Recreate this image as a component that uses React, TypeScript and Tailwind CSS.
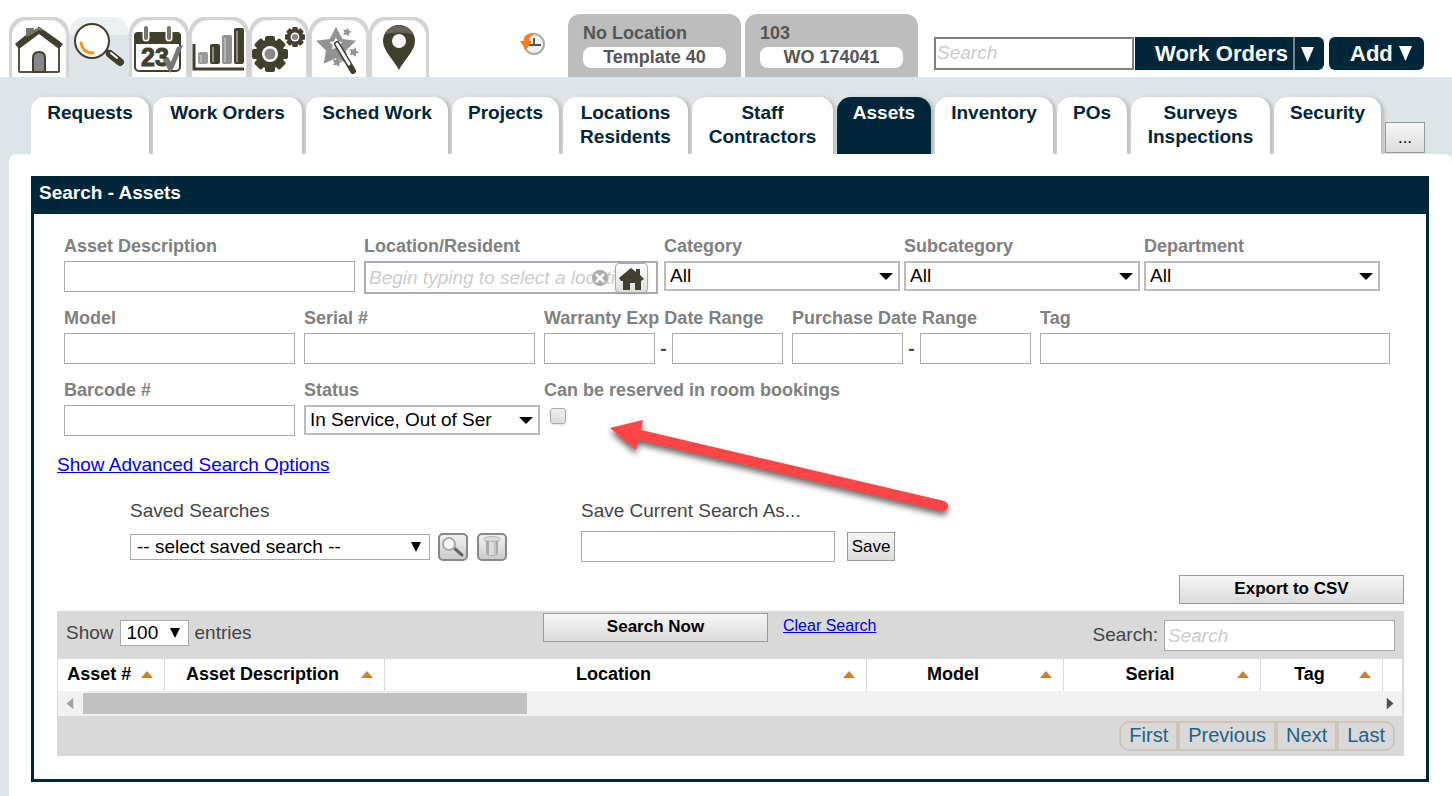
import React from 'react';
import { clsx } from 'clsx';

const TOOLS = ['Home', 'Search', 'Calendar', 'Reports', 'Settings', 'Wizard', 'Map'] as const;
type Tool = (typeof TOOLS)[number];

const STAR = 'M0-10 3.2-4 10-3.1 5 1.8 6.2 8.4 0 5.6-6.2 8.4-5 1.8-10-3.1-3.2-4Z';

const NAV_TABS = [
  { lines: ['Requests'], width: 'w-[118px]' },
  { lines: ['Work Orders'], width: 'w-[149px]' },
  { lines: ['Sched Work'], width: 'w-[142px]' },
  { lines: ['Projects'], width: 'w-[107px]' },
  { lines: ['Locations', 'Residents'], width: 'w-[125px]' },
  { lines: ['Staff', 'Contractors'], width: 'w-[141px]' },
  { lines: ['Assets'], width: 'w-[94px]', active: true },
  { lines: ['Inventory'], width: 'w-[118px]' },
  { lines: ['POs'], width: 'w-[70px]' },
  { lines: ['Surveys', 'Inspections'], width: 'w-[139px]' },
  { lines: ['Security'], width: 'w-[107px]' },
];

const COLUMNS = [
  { label: 'Asset #', width: 'w-[106px]' },
  { label: 'Asset Description', width: 'w-[220px]' },
  { label: 'Location', width: 'w-[482px]' },
  { label: 'Model', width: 'w-[197px]' },
  { label: 'Serial', width: 'w-[197px]' },
  { label: 'Tag', width: 'w-[122px]' },
];

const greyButton = 'border border-[#999] bg-linear-to-b from-[#f6f6f6] to-[#dcdcdc] text-black';
const textBox = 'h-[31px] border border-[#a9a9a9] bg-white px-1 text-[19px] text-black outline-none';
const placeholder = 'placeholder:italic placeholder:text-[#ccc]';

const Gear: React.FC<{ x: number; y: number; r: number }> = ({ x, y, r }) => (
  <g transform={`translate(${x} ${y}) scale(${r / 18})`}>
    {[0, 45, 90, 135].map((angle) => (
      <rect key={angle} x="-5" y="-18" width="10" height="36" rx="2" transform={`rotate(${angle})`} fill="#423f2c" />
    ))}
    <circle r="14.5" fill="#423f2c" />
    <circle r="8" fill="#fff" />
    <circle r="5.5" fill="#888" />
  </g>
);

const ToolIcon: React.FC<{ name: Tool }> = ({ name }) => (
  <svg viewBox="0 0 60 60" className="size-[60px]" aria-hidden="true">
    {name === 'Home' && (
      <>
        <path d="M10 25v29q0 1 1 1h38q1 0 1-1V25L30 11Z" fill="#fff" stroke="#55523c" strokeWidth="2" />
        <path d="M17 11h8v3l5-4L54 27l-4 5L30 17 10 32l-4-5 11-9Z" fill="#423f2c" />
        <path d="M17 11h8v3l5-4 6 4-6-1-8 5-5 2Z" fill="#77766b" />
        <path d="M24 55V41q0-6 6-6t6 6v14Z" fill="#888" stroke="#423f2c" strokeWidth="2" />
      </>
    )}
    {name === 'Search' && (
      <>
        <path d="m36 32 4 4" stroke="#423f2c" strokeWidth="4" />
        <path d="m41 37 10 8" stroke="#423f2c" strokeWidth="8" strokeLinecap="round" />
        <path d="m42 36 6 5" stroke="#fff" strokeWidth="2" strokeLinecap="round" />
        <circle cx="23" cy="24" r="17" fill="#fff" stroke="#423f2c" strokeWidth="2" />
        <path d="M12 26q2 10 12 10" fill="none" stroke="#ff9017" strokeWidth="3" strokeLinecap="round" />
      </>
    )}
    {name === 'Calendar' && (
      <>
        <rect x="6" y="16" width="45" height="38" rx="4" fill="#fff" stroke="#423f2c" strokeWidth="2" />
        <path d="M5 27V19q0-4 4-4h39q4 0 4 4v8Z" fill="#423f2c" />
        <path d="M17 11v10M40 11v10" stroke="#fff" strokeWidth="7" strokeLinecap="round" />
        <path d="M17 11v10M40 11v10" stroke="#77766b" strokeWidth="4" strokeLinecap="round" />
        <text x="12" y="49" fontSize="25" fontWeight="700" fill="#423f2c" stroke="#423f2c">23</text>
        <path d="m34 43 5-3 3 5 6-15 6-2-9 22-4 6Z" fill="#777" />
      </>
    )}
    {name === 'Reports' && (
      <>
        <path d="M5 27v25h50" fill="none" stroke="#423f2c" strokeWidth="3" />
        <rect x="9" y="35" width="10" height="12" rx="2" fill="#999" />
        <rect x="21" y="27" width="10" height="20" rx="2" fill="#423f2c" />
        <rect x="33" y="18" width="10" height="29" rx="2" fill="#929292" />
        <rect x="45" y="11" width="10" height="36" rx="2" fill="#423f2c" />
        <path d="M12 38v7M24 30v15M36 21v24M48 14v31" stroke="#d8d8d2" />
      </>
    )}
    {name === 'Settings' && (
      <>
        <Gear x={21} y={37} r={18} />
        <Gear x={46} y={20} r={10} />
      </>
    )}
    {name === 'Wizard' && (
      <>
        <path d={STAR} transform="translate(27 30) scale(2)" fill="#929292" />
        <path d={STAR} transform="translate(38 15) rotate(15) scale(.45)" fill="#929292" />
        <path d={STAR} transform="translate(45 35) rotate(20) scale(.5)" fill="#929292" />
        <path d={STAR} transform="translate(28 45) rotate(10) scale(.5)" fill="#929292" />
        <path d={STAR} transform="translate(27 27) scale(.65)" fill="#fff" />
        <path d="m28 27 16 27" stroke="#423f2c" strokeWidth="6" strokeLinecap="round" />
        <path d="m28 27 12 20" stroke="#fff" strokeWidth="3" strokeLinecap="round" />
      </>
    )}
    {name === 'Map' && (
      <>
        <path d="M30 53C25 43 14 34 14 24a16 16 0 0 1 32 0c0 10-11 19-16 29Z" fill="#423f2c" />
        <path d="M16 17a16 16 0 0 1 28 0q-14-3-28 0Z" fill="#67655a" />
        <circle cx="30" cy="24" r="7" fill="#fff" />
      </>
    )}
  </svg>
);

const Triangle: React.FC<{ className: string }> = ({ className }) => (
  <svg viewBox="0 0 12 12" preserveAspectRatio="none" className={className} aria-hidden="true">
    <path d="M0 0h12L6 12Z" fill="currentColor" />
  </svg>
);

interface FieldProps {
  label: string;
  id: string;
  className: string;
  children: React.ReactNode;
}

const Field: React.FC<FieldProps> = ({ label, id, className, children }) => (
  <div className={clsx('h-[72px] shrink-0', className)}>
    <label htmlFor={id} className="mb-[3px] block text-[18px] leading-6 font-bold whitespace-nowrap text-[#808080]">
      {label}
    </label>
    {children}
  </div>
);

const FilterSelect: React.FC<{ id: string; value: string }> = ({ id, value }) => (
  <div className="relative w-[236px]">
    <select
      id={id}
      className="block h-[30px] w-full appearance-none border-2 border-[#bbb] bg-white pr-[46px] pl-1 text-[19px] leading-6 text-black"
    >
      <option>{value}</option>
    </select>
    <Triangle className="pointer-events-none absolute top-3 right-[7px] h-[7px] w-3.5 text-black" />
  </div>
);

const DateRange: React.FC<{ id: string; label: string }> = ({ id, label }) => (
  <div className="flex items-center">
    <input id={id} className={clsx(textBox, 'w-[111px]')} />
    <span className="w-[17px] text-center text-[19px] leading-6 font-bold text-[#444]">-</span>
    <input aria-label={`${label} end`} className={clsx(textBox, 'w-[111px]')} />
  </div>
);

const Header = () => (
  <header className="flex h-[77px] items-end bg-white pl-[9px]">
    {TOOLS.map((tool) => (
      <button
        key={tool}
        aria-label={tool}
        className={clsx(
          'h-[60px] w-[60px] shrink-0 rounded-t-[16px]',
          tool === 'Search'
            ? 'bg-linear-to-b from-[#edf0f3] from-30% to-[#dee5e8] to-30%'
            : 'bg-white shadow-[inset_3px_3px_1px_#d3d3d3,inset_-3px_3px_1px_#d3d3d3]'
        )}
      >
        <ToolIcon name={tool} />
      </button>
    ))}

    <button aria-label="History" className="mb-5 ml-[91px] shrink-0">
      <svg viewBox="0 0 26 26" className="size-[26px]">
        <circle cx="14" cy="13" r="10" fill="#f1f3f3" stroke="#a7aeae" strokeWidth="2" />
        <path d="M14 7v7M9 14h12" stroke="#555" strokeWidth="2" />
        <path d="M15 2Q3 2 4 10H0l6 9 6-9H9q0-4 6-8Z" fill="#ff7a1c" />
      </svg>
    </button>

    {[
      ['No Location', 'Template 40'],
      ['103', 'WO 174041'],
    ].map(([place, item], i) => (
      <div
        key={item}
        className={clsx(
          'h-[63px] w-[173px] shrink-0 rounded-t-[12px] bg-[#bdbdbd] px-[15px] pt-2 text-[18px] font-bold text-[#555]',
          i === 0 ? 'ml-[22px]' : 'ml-1'
        )}
      >
        <p className="leading-[22px]">{place}</p>
        <button className="mt-[3px] block h-[21px] w-[143px] rounded-[8px] bg-white leading-[21px]">{item}</button>
      </div>
    ))}

    <div className="mb-[7px] ml-4 flex h-[33px] shrink-0">
      <input
        aria-label="Search everything"
        placeholder="Search"
        className={clsx('w-[200px] border-2 border-[#808080] bg-white px-px text-[19px] outline-none', placeholder)}
      />
      <button className="ml-px w-[158px] bg-[#002639] pl-[15px] text-[22px] leading-[33px] font-bold text-white">
        Work Orders
      </button>
      <button
        aria-label="Choose search type"
        className="flex w-[31px] items-center rounded-r-[6px] border-l-2 border-[#808080] bg-[#002639] pt-0.5 pl-1.5 text-white"
      >
        <Triangle className="h-[15px] w-[13px]" />
      </button>
      <button className="ml-[5px] flex w-[95px] items-center gap-1.5 rounded-[6px] bg-[#002639] pl-[21px] text-[22px] font-bold text-white">
        Add
        <Triangle className="h-[15px] w-[13px]" />
      </button>
    </div>
  </header>
);

const NavTabs = () => (
  <nav className="flex items-end gap-1 pt-5 pl-[31px] text-[19px] leading-6 font-bold text-[#002639]">
    {NAV_TABS.map((tab) => (
      <a
        key={tab.lines[0]}
        href="#"
        className={clsx(
          'h-[57px] shrink-0 rounded-t-[14px] pt-1 text-center shadow-[3px_1px_4px_#b8b8b8]',
          tab.width,
          tab.active ? 'bg-[#002639] text-white' : 'bg-white'
        )}
      >
        {tab.lines.map((line) => (
          <span key={line} className="block">{line}</span>
        ))}
      </a>
    ))}
    <button aria-label="More tabs" className={clsx('mb-px h-[31px] w-10 shrink-0 text-[17px] font-normal', greyButton)}>
      ...
    </button>
  </nav>
);

const SearchForm = () => (
  <div className="px-[30px] pt-5">
    <div className="flex">
      <Field label="Asset Description" id="description" className="w-[300px]">
        <input id="description" className={clsx(textBox, 'w-[291px]')} />
      </Field>
      <Field label="Location/Resident" id="location" className="w-[300px]">
        <div className="relative w-[294px]">
          <input
            id="location"
            placeholder="Begin typing to select a location"
            className={clsx(
              'block h-[33px] w-full border-2 border-[#aaabb2] bg-white pr-[41px] pl-[3px] text-[19px] outline-none',
              placeholder
            )}
          />
          <button aria-label="Clear location" className="absolute top-2 right-[49px]">
            <svg viewBox="0 0 18 18" className="size-[18px]">
              <circle cx="9" cy="9" r="8" fill="#aaa" />
              <path d="m5 5 8 8m0-8-8 8" stroke="#fff" strokeWidth="2.5" />
            </svg>
          </button>
          <button
            aria-label="Browse locations"
            className="absolute top-[2px] right-[10px] rounded-[4px] border border-[#aaa] bg-linear-to-b from-white to-[#ddd] shadow-sm"
          >
            <svg viewBox="0 0 31 28" className="h-7 w-[31px]">
              <path d="m3 14 12-10 5 4V5h4v6l4 4-3 2v9h-6v-7h-5v7H7v-9H5Z" fill="#423f2c" />
            </svg>
          </button>
        </div>
      </Field>
      <Field label="Category" id="category" className="w-[240px]">
        <FilterSelect id="category" value="All" />
      </Field>
      <Field label="Subcategory" id="subcategory" className="w-[240px]">
        <FilterSelect id="subcategory" value="All" />
      </Field>
      <Field label="Department" id="department" className="w-[240px]">
        <FilterSelect id="department" value="All" />
      </Field>
    </div>

    <div className="flex">
      <Field label="Model" id="model" className="w-[240px]">
        <input id="model" className={clsx(textBox, 'w-[231px]')} />
      </Field>
      <Field label="Serial #" id="serial" className="w-[240px]">
        <input id="serial" className={clsx(textBox, 'w-[231px]')} />
      </Field>
      <Field label="Warranty Exp Date Range" id="warranty" className="w-[248px]">
        <DateRange id="warranty" label="Warranty Exp Date Range" />
      </Field>
      <Field label="Purchase Date Range" id="purchase" className="w-[248px]">
        <DateRange id="purchase" label="Purchase Date Range" />
      </Field>
      <Field label="Tag" id="tag" className="w-[350px]">
        <input id="tag" className={clsx(textBox, 'w-full')} />
      </Field>
    </div>

    <div className="flex">
      <Field label="Barcode #" id="barcode" className="w-[240px]">
        <input id="barcode" className={clsx(textBox, 'w-[231px]')} />
      </Field>
      <Field label="Status" id="status" className="w-[240px]">
        <FilterSelect id="status" value="In Service, Out of Service" />
      </Field>
      <Field label="Can be reserved in room bookings" id="reservable" className="w-[300px]">
        <input
          id="reservable"
          type="checkbox"
          className="mt-1.5 ml-1.5 block size-4 appearance-none rounded-[3px] border border-[#aaa] bg-linear-to-b from-[#eee] to-[#dcdcdc] shadow-sm"
        />
      </Field>
    </div>
  </div>
);

const SavedSearches = () => (
  <div className="flex pt-[22px] pl-24 text-[19px] text-[#444]">
    <div className="w-[451px]">
      <label htmlFor="saved" className="block leading-6">Saved Searches</label>
      <div className="mt-2 flex h-[31px] items-center">
        <div className="relative mr-2 w-[300px]">
          <select
            id="saved"
            className="block h-[26px] w-full appearance-none border border-[#a9a9a9] bg-white pl-1.5 leading-6 text-black"
          >
            <option>-- select saved search --</option>
          </select>
          <Triangle className="pointer-events-none absolute top-2 right-[9px] h-2.5 w-2.5 text-black" />
        </div>
        <button
          aria-label="Run saved search"
          className="mr-[9px] h-7 w-[30px] rounded-[5px] border-2 border-[#888] bg-linear-to-b from-[#f1f1f1] to-[#ccc]"
        >
          <svg viewBox="0 0 26 24" className="h-6 w-[26px]">
            <path d="m14 13 8 7" stroke="#666" strokeWidth="3" strokeLinecap="round" />
            <circle cx="9" cy="9" r="6" fill="#f5f5f5" stroke="#aaa" strokeWidth="2" />
          </svg>
        </button>
        <button
          aria-label="Delete saved search"
          className="h-7 w-[30px] rounded-[5px] border-2 border-[#888] bg-linear-to-b from-[#f1f1f1] to-[#ccc]"
        >
          <svg viewBox="0 0 26 24" className="h-6 w-[26px]">
            <path d="M5 4h16l-2 3v12q-6 4-12 0V7Z" fill="#a9a9a9" />
            <path d="M10 6h5v14h-5Z" fill="#dcdcdc" />
            <path d="M15 6h2v14h-2Z" fill="#c4c4c4" />
            <ellipse cx="13" cy="4" rx="8" ry="2.5" fill="#dcdcdc" stroke="#b5b5b5" />
          </svg>
        </button>
      </div>
    </div>
    <div>
      <label htmlFor="save-as" className="block leading-6">Save Current Search As...</label>
      <div className="mt-2 flex items-center gap-3">
        <input id="save-as" className={clsx(textBox, 'w-[254px]')} />
        <button className={clsx('h-[29px] w-12 text-[17px]', greyButton)}>Save</button>
      </div>
    </div>
  </div>
);

const ResultsPanel = () => (
  <section className="mt-[7px] mr-[22px] ml-[23px] bg-[#d9d9d9] text-[19px] text-[#444]">
    <div className="flex h-12 items-start">
      <div className="flex w-[486px] items-center pt-[9px] pl-[9px] leading-[26px]">
        <label htmlFor="page-size">Show</label>
        <div className="relative mx-[6px] w-[69px]">
          <select
            id="page-size"
            className="block h-[26px] w-full appearance-none border border-[#a9a9a9] bg-white pl-1.5 leading-6 text-black"
          >
            <option>100</option>
          </select>
          <Triangle className="pointer-events-none absolute top-2 right-[9px] h-2.5 w-2.5 text-black" />
        </div>
        entries
      </div>
      <button className={clsx('mt-0.5 h-[29px] w-[225px] pb-0.5 text-[17px] font-bold', greyButton)}>Search Now</button>
      <a href="#" className="mt-[3px] ml-[15px] text-[16px] leading-6 text-[#0000ee] underline">Clear Search</a>
      <div className="mt-[9px] mr-[9px] ml-auto flex items-center gap-[6px]">
        <label htmlFor="filter">Search:</label>
        <input id="filter" placeholder="Search" className={clsx(textBox, placeholder, 'w-[231px] px-[3px]')} />
      </div>
    </div>

    <div className="mr-0.5 ml-px bg-white">
      <table className="w-full table-fixed border-collapse text-[18px] text-black">
        <thead>
          <tr className="h-8">
            {COLUMNS.map((col) => (
              <th key={col.label} className={clsx('border-r border-[#d9d9d9] p-0', col.width)}>
                <div className="flex items-center pr-[11px] pb-0.5 leading-6">
                  <span className="flex-1 text-center whitespace-nowrap">{col.label}</span>
                  <Triangle className="h-[7px] w-3 rotate-180 text-[#cb802c]" />
                </div>
              </th>
            ))}
            <th className="p-0" aria-label="More columns" />
          </tr>
        </thead>
      </table>
      <div className="flex h-[25px] items-center bg-[#f1f1f1]">
        <Triangle className="mr-1 ml-1.5 h-[7px] w-3 rotate-90 text-[#a3a3a3]" />
        <div className="ml-[3px] h-[21px] w-[444px] bg-[#c1c1c1]" />
        <Triangle className="mr-[6px] ml-auto h-[7px] w-3 -rotate-90 text-[#505050]" />
      </div>
    </div>

    <div className="flex h-10 justify-end pt-[5px] pr-[9px]">
      <div className="flex h-[30px] divide-x-4 divide-[#cfc4b8] rounded-[10px] border-2 border-[#cfc4b8] text-[20px] leading-[24px] text-[#1f6289]">
        {['First', 'Previous', 'Next', 'Last'].map((page) => (
          <button key={page} className="px-2 pb-0.5">{page}</button>
        ))}
      </div>
    </div>
  </section>
);

const PointerArrow = () => (
  <svg
    viewBox="0 0 350 105"
    className="pointer-events-none absolute top-[415px] left-[605px] h-[105px] w-[350px] drop-shadow-[0_4px_3px_#0009]"
    aria-hidden="true"
  >
    <path d="M5 13 38 5l-2 10 303 71a5 5 0 0 1-2 10L33 25l-2 10Z" fill="#ff4545" />
  </svg>
);

export default function App() {
  return (
    <div className="relative min-h-screen overflow-x-hidden bg-[#dee5e8] font-['Liberation_Sans',Arial,sans-serif]">
      <Header />
      <NavTabs />
      <main className="relative ml-[9px] min-h-[642px] rounded-t-[8px] bg-white pt-[22px] pr-[23px] pl-[22px]">
        <div className="border-[3px] border-[#002639] pb-[23px]">
          <h1 className="h-[35px] bg-[#002639] pl-[5px] text-[19px] leading-7 font-bold text-white">Search - Assets</h1>
          <SearchForm />
          <a href="#" className="ml-[23px] block w-fit pt-[3px] text-[19px] leading-6 text-[#0000ee] underline">
            Show Advanced Search Options
          </a>
          <SavedSearches />
          <div className="mt-[13px] mr-[22px] flex justify-end">
            <button className={clsx('h-[29px] w-[225px] pb-0.5 text-[17px] font-bold', greyButton)}>Export to CSV</button>
          </div>
          <ResultsPanel />
        </div>
      </main>
      <PointerArrow />
    </div>
  );
}
